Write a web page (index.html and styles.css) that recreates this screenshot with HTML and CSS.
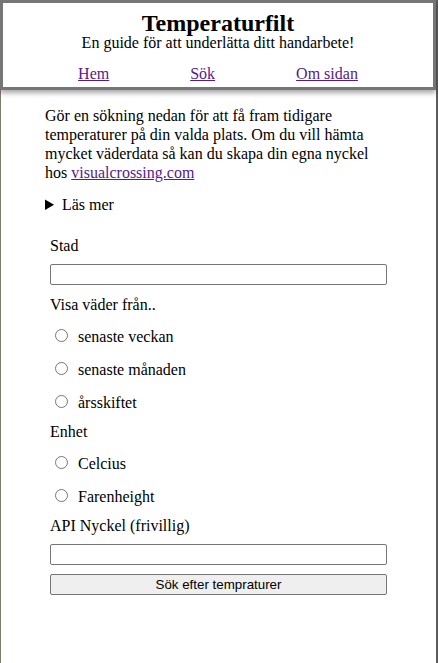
FILE: index.html
```html
<!DOCTYPE html>
<html lang="sv">
<head>
<meta charset="utf-8">
<title>Temperaturfilt</title>
<link rel="stylesheet" href="styles.css">
</head>
<body>
<div class="page">
  <header class="site-header">
    <h1 class="title">Temperaturfilt</h1>
    <p class="subtitle">En guide för att underlätta ditt handarbete!</p>
    <nav class="nav">
      <a href="#" class="nav-link">Hem</a>
      <a href="#" class="nav-link">Sök</a>
      <a href="#" class="nav-link">Om sidan</a>
    </nav>
  </header>
  <main class="main">
    <p class="intro">Gör en sökning nedan för att få fram tidigare temperaturer på din valda plats. Om du vill hämta mycket väderdata så kan du skapa din egna nyckel hos <a href="#" class="link">visualcrossing.com</a></p>
    <details class="more">
      <summary>Läs mer</summary>
    </details>
    <form class="form">
      <label class="field-label" for="stad">Stad</label>
      <input class="text-input" type="text" id="stad">
      <div class="field-label gap-11">Visa väder från..</div>
      <div class="radio-row first"><input type="radio" name="period" id="p1"><label class="radio-label" for="p1">senaste veckan</label></div>
      <div class="radio-row"><input type="radio" name="period" id="p2"><label class="radio-label" for="p2">senaste månaden</label></div>
      <div class="radio-row"><input type="radio" name="period" id="p3"><label class="radio-label" for="p3">årsskiftet</label></div>
      <div class="field-label gap-11">Enhet</div>
      <div class="radio-row first"><input type="radio" name="unit" id="u1"><label class="radio-label" for="u1">Celcius</label></div>
      <div class="radio-row"><input type="radio" name="unit" id="u2"><label class="radio-label" for="u2">Farenheight</label></div>
      <label class="field-label gap-11" for="api">API Nyckel (frivillig)</label>
      <input class="text-input" type="text" id="api">
      <button class="submit" type="button">Sök efter tempraturer</button>
    </form>
  </main>
</div>
</body>
</html>
```

FILE: styles.css
```css
html, body {
  margin: 0;
  padding: 0;
  background: #ffffff;
}

body {
  font-family: "Liberation Serif", "Times New Roman", serif;
  font-size: 16px;
  color: #000;
}

.page {
  min-height: 663px;
  box-sizing: border-box;
  border-left: 1px solid #85796a;
  border-right: 2px solid #5c5c5c;
}

.site-header {
  margin-left: -1px;
  border: 3px solid #767676;
  background: #fff;
  box-shadow: 0 3px 5px rgba(0, 0, 0, 0.35);
  padding: 10px 0 4px;
  text-align: center;
}

.title {
  margin: 0;
  font-size: 24px;
  line-height: 21px;
  font-weight: bold;
}

.subtitle {
  margin: 0;
  line-height: 18px;
}

.nav {
  display: flex;
  justify-content: center;
  gap: 81px;
  margin-top: 13px;
  line-height: 18px;
}

.nav-link, .link {
  color: #551a8b;
}

.main {
  padding: 0 44px;
}

.intro {
  margin: 16px 0 14px;
  line-height: 19px;
}

.more {
  line-height: 18px;
}

.more summary {
  cursor: pointer;
}

.form {
  display: flex;
  flex-direction: column;
  align-items: stretch;
  margin-top: 23px;
  padding: 0 5px;
}

.field-label {
  display: block;
  line-height: 18px;
}

.gap-11 { margin-top: 11px; }

.text-input {
  margin: 9px 0 0;
  height: 21px;
  box-sizing: border-box;
  border: 1px solid #767676;
  border-radius: 2px;
  padding: 1px 2px;
  font-size: 13.33px;
}

.radio-row {
  display: flex;
  align-items: flex-start;
  height: 18px;
  line-height: 18px;
  margin-top: 15px;
}

.radio-row.first {
  margin-top: 14px;
}

.radio-row input {
  flex: none;
  width: 13px;
  height: 13px;
  margin: 1px 3px 0 5px;
}

.radio-label {
  margin-left: 7px;
}

.submit {
  margin-top: 9px;
  height: 21px;
  box-sizing: border-box;
  border: 1px solid #767676;
  border-radius: 2px;
  background: #efefef;
  font-family: "Liberation Sans", Arial, sans-serif;
  font-size: 13.33px;
  color: #000;
  padding: 1px 6px;
}
```
